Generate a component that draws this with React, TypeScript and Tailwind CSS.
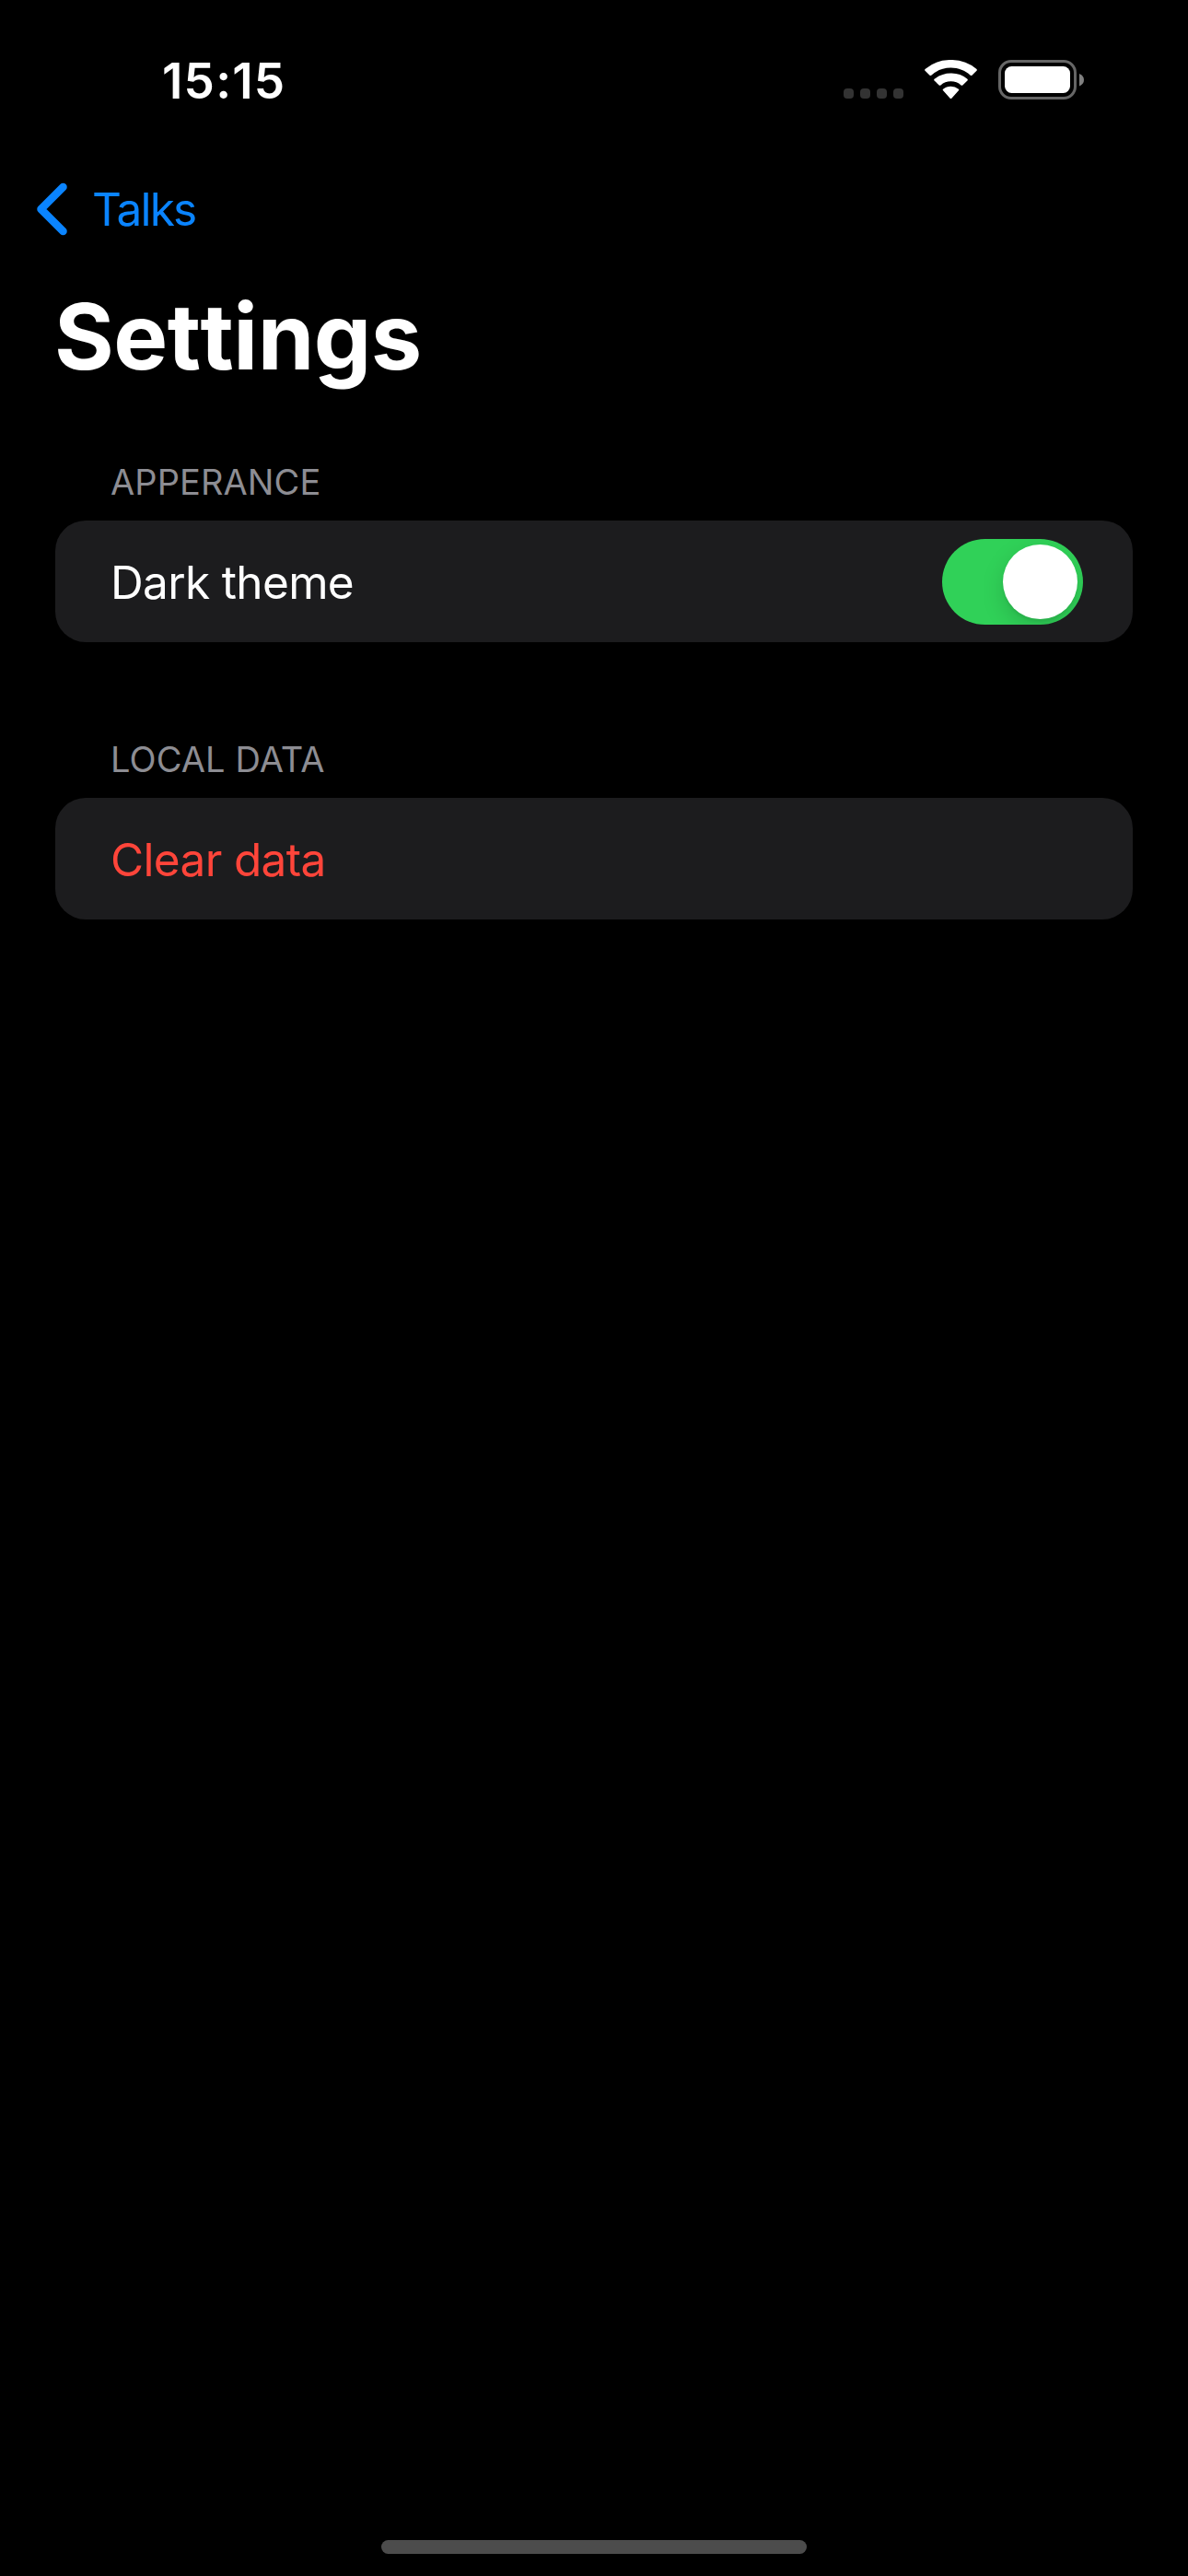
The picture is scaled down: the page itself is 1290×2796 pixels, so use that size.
import type { ReactNode } from "react";

function CellularDots() {
  return (
    <div className="flex gap-[7px] mt-[30px]">
      {[0, 1, 2, 3].map((dot) => (
        <span key={dot} className="size-[11px] rounded-[4px] bg-[#333333]" />
      ))}
    </div>
  );
}

function WifiIcon() {
  return (
    <svg width="57" height="43" viewBox="1.2 0 55.6 43" preserveAspectRatio="none" fill="#fff" className="ml-[23px]">
      <path d="M29 8.6c7.9 0 15.2 3 20.700 8.100.5.5 1.200.500 1.700 0l4.900-4.900c.5-.5.500-1.200 0-1.700A40 40 0 0 0 29 0 40 40 0 0 0 1.700 10.100c-.5.5-.5 1.200 0 1.700l4.900 4.900c.5.5 1.200.5 1.700 0A30.400 30.400 0 0 1 29 8.600Z" />
      <path d="M29 23.300c4.100 0 7.900 1.500 10.800 4.100.5.5 1.200.5 1.700 0l5-4.900c.5-.5.5-1.200 0-1.700A25.600 25.600 0 0 0 29 14.500c-6.700 0-12.900 2.400-17.500 6.300-.5.5-.5 1.200 0 1.700l5 4.900c.5.5 1.200.5 1.700 0A16.200 16.200 0 0 1 29 23.300Z" />
      <path d="M37.200 33.300c.5-.5.500-1.200 0-1.600A13 13 0 0 0 29 28.800c-3.100 0-5.900 1.100-8.200 2.900-.5.4-.5 1.100 0 1.600l7.400 8.400c.500.500 1.100.500 1.600 0Z" />
    </svg>
  );
}

function BatteryIcon() {
  return (
    <svg width="94" height="43" viewBox="0 0 94 43" className="ml-[23px]">
      <rect x="1.500" y="1.500" width="82" height="40" rx="12.500" fill="none" stroke="#666" strokeWidth="3" />
      <rect x="7" y="7" width="71" height="29" rx="7.500" fill="#fff" />
      <path d="M88 15c3.200 1.200 5 3.700 5 6.700s-1.800 5.500-5 6.700Z" fill="#808080" />
    </svg>
  );
}

function StatusBar() {
  return (
    <header className="flex h-[173px] justify-between pl-[176px] pr-[112px]">
      <span className="text-[53px] leading-[176px] font-semibold tracking-[1.2px]">15:15</span>
      <div className="flex items-center">
        <CellularDots />
        <WifiIcon />
        <BatteryIcon />
      </div>
    </header>
  );
}

function Section({ title, children }: { title: string; children: ReactNode }) {
  return (
    <section>
      <h2 className="pl-[60px] text-[38px] leading-[84px] tracking-[0.1px] text-[#8d8d93]">{title}</h2>
      <div className="flex h-[132px] items-center justify-between rounded-[33px] bg-[#1c1c1e] pl-[60px] pr-[54px] text-[49.5px] tracking-[-0.65px]">
        {children}
      </div>
    </section>
  );
}

function Switch() {
  return (
    <div className="flex h-[93px] w-[153px] items-center justify-end overflow-hidden rounded-full bg-[#30d158] pr-[6px]">
      <span className="size-[81px] rounded-full bg-white shadow-[0_9px_24px_rgba(0,0,0,0.15),0_3px_3px_rgba(0,0,0,0.06)]" />
    </div>
  );
}

export default function App() {
  return (
    <div className="flex h-[2796px] w-[1290px] flex-col bg-black font-['Inter',sans-serif] text-white">
      <StatusBar />
      <nav className="mt-[3px] flex h-[102px] items-center pl-[39px] text-[#0a84ff]">
        <svg width="35" height="58" viewBox="0 0 35 58" fill="none" stroke="#0a84ff" strokeWidth="8.500" strokeLinecap="round" strokeLinejoin="round">
          <path d="M29.500 5 5.500 29l24 24" />
        </svg>
        <span className="ml-[26px] text-[49.5px] leading-[102px] tracking-[-1.8px]">Talks</span>
      </nav>
      <h1 className="pl-[59px] text-[99px] leading-[174px] font-bold tracking-[-0.5px] [font-kerning:none] [font-variant-ligatures:no-contextual]">
        Settings
      </h1>
      <main className="mt-[29px] flex flex-col gap-[85px] px-[60px]">
        <Section title="APPERANCE">
          <span className="pt-[2px]">Dark theme</span>
          <Switch />
        </Section>
        <Section title="LOCAL DATA">
          <span className="pt-[2px] text-[#ff453a]">Clear data</span>
        </Section>
      </main>
      <div className="mt-auto mb-[24px] h-[15px] w-[462px] self-center rounded-full bg-[#4c4c4c]" />
    </div>
  );
}
